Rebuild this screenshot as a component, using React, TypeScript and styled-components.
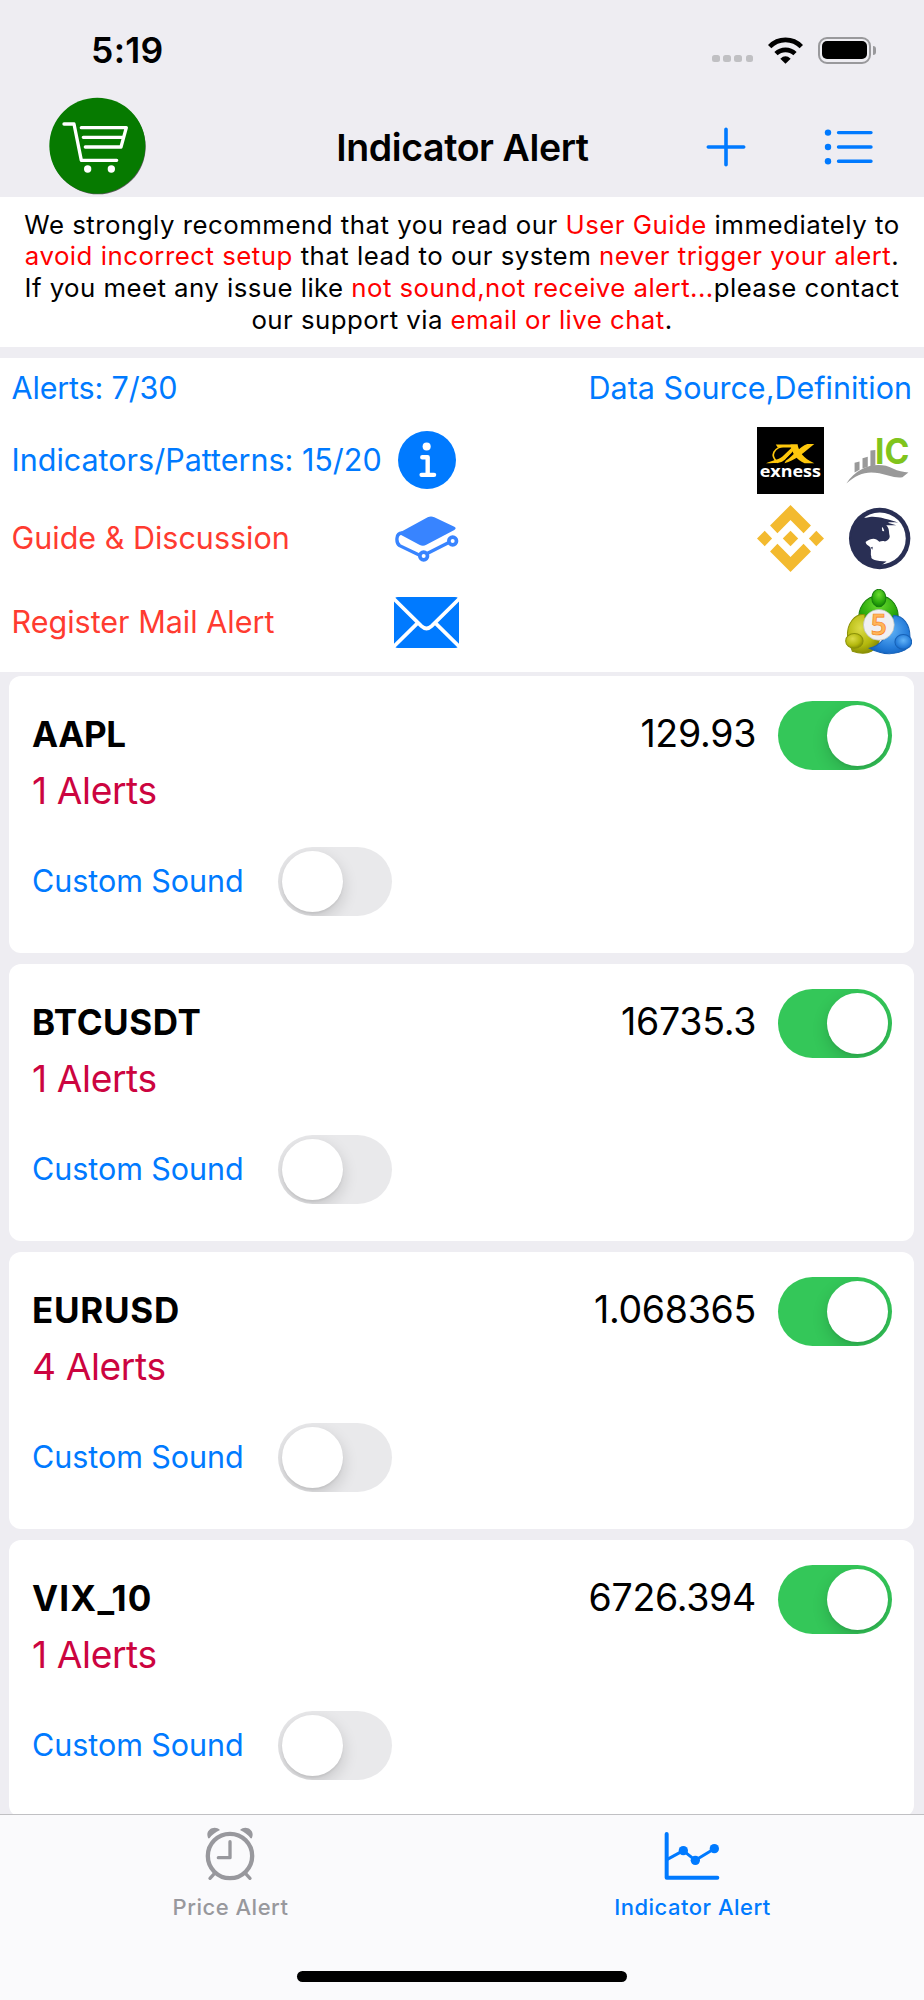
import React from "react";
import styled, { createGlobalStyle } from "styled-components";

const colors = {
  blue: "#007aff",
  red: "#ff3b30",
  pureRed: "#ff0000",
  crimson: "#cc0440",
  green: "#34c759",
  gray: "#98989d",
  background: "#eeedf2",
};

const GlobalStyle = createGlobalStyle`
  * {
    box-sizing: border-box;
  }

  body {
    margin: 0;
    background: ${colors.background};
    font-family: Inter, "Liberation Sans", sans-serif;
    color: #000;
  }

  svg {
    display: block;
    flex: none;
  }
`;

const Screen = styled.div`
  display: flex;
  flex-direction: column;
  width: 924px;
  height: 2000px;
  overflow: hidden;
`;

const StatusBar = styled.div`
  display: flex;
  align-items: center;
  justify-content: space-between;
  flex: none;
  height: 97px;
  padding: 3px 48px 0 91px;
`;

const Time = styled.span`
  font-size: 35.5px;
  font-weight: 600;
  letter-spacing: 0.3px;
`;

const StatusIcons = styled.div`
  display: flex;
  align-items: center;
`;

const SignalDots = styled.div`
  display: flex;
  gap: 3.6px;
  margin: 17px 15px 0 0;
`;

const SignalDot = styled.span`
  width: 7.5px;
  height: 7.5px;
  border-radius: 2.5px;
  background: #c0c0c3;
`;

const Battery = styled.div`
  display: flex;
  align-items: center;
  margin-left: 15px;
`;

const BatteryCase = styled.div`
  width: 53px;
  height: 27px;
  padding: 2.3px;
  border: 2px solid #99999c;
  border-radius: 9px;
`;

const BatteryCharge = styled.div`
  height: 100%;
  border-radius: 5px;
  background: #000;
`;

const BatteryTip = styled.div`
  width: 3px;
  height: 9px;
  margin-left: 2px;
  border-radius: 0 4px 4px 0;
  background: #99999c;
`;

const NavBar = styled.header`
  display: grid;
  grid-template-columns: 1fr auto 1fr;
  align-items: center;
  flex: none;
  height: 99.5px;
  padding: 0 51px 0 49px;
`;

const NavTitle = styled.h1`
  margin: 0;
  padding-left: 3px;
  font-size: 37.5px;
  font-weight: 600;
  letter-spacing: -0.4px;
`;

const NavActions = styled.div`
  display: flex;
  align-items: center;
  justify-content: flex-end;
  gap: 78px;
`;

const Notice = styled.p`
  flex: none;
  height: 150.5px;
  margin: 0;
  padding-top: 12px;
  background: #fff;
  font-size: 25.8px;
  line-height: 31.8px;
  text-align: center;
  white-space: nowrap;
`;

const NoticeLine = styled.span<{ $spacing: number }>`
  display: block;
  letter-spacing: ${({ $spacing }) => $spacing}px;
`;

const Warning = styled.span`
  color: ${colors.pureRed};
`;

const Info = styled.section`
  flex: none;
  height: 314px;
  margin-top: 11px;
  padding: 0 12px 0 11.5px;
  background: #fff;
`;

const InfoRow = styled.div<{ $height: number }>`
  display: flex;
  align-items: center;
  height: ${({ $height }) => $height}px;
`;

const InfoLabel = styled.span<{ $color: string; $spacing?: number }>`
  flex: 0 0 382.5px;
  padding-bottom: 2px;
  color: ${({ $color }) => $color};
  font-size: 30.5px;
  letter-spacing: ${({ $spacing = 0 }) => $spacing}px;
  white-space: nowrap;
`;

const InfoLink = styled.span`
  margin-left: auto;
  padding-bottom: 2px;
  color: ${colors.blue};
  font-size: 30.5px;
`;

const InfoIcon = styled.span`
  display: flex;
  justify-content: center;
  width: 65px;
`;

const Sources = styled.div`
  display: flex;
  align-items: center;
  gap: 22px;
  margin-left: auto;
`;

const AlertList = styled.main`
  display: flex;
  flex: 1;
  flex-direction: column;
  gap: 11px;
  min-height: 0;
  padding: 4px 10px 0 9px;
  overflow: hidden;
`;

const Card = styled.article`
  flex: none;
  height: 277px;
  padding: 25px 22px 0 23px;
  border-radius: 12px;
  background: #fff;
`;

const CardHead = styled.div`
  display: flex;
  align-items: center;
  height: 69px;
`;

const Ticker = styled.h2<{ $spacing: number }>`
  margin: 0;
  padding-bottom: 3px;
  font-size: 35px;
  font-weight: 700;
  line-height: 66px;
  letter-spacing: ${({ $spacing }) => $spacing}px;
`;

const Price = styled.span`
  margin: 0 22px 0 auto;
  padding-bottom: 3px;
  font-size: 37.5px;
  line-height: 66px;
  letter-spacing: -0.3px;
`;

const AlertCount = styled.div`
  height: 77px;
  color: ${colors.crimson};
  font-size: 37.2px;
  line-height: 42px;
  letter-spacing: -0.4px;
`;

const SoundRow = styled.div`
  display: flex;
  align-items: center;
  height: 69px;
`;

const SoundLabel = styled.span`
  width: 246px;
  padding-bottom: 2px;
  color: ${colors.blue};
  font-size: 30.5px;
  letter-spacing: -0.05px;
`;

const Track = styled.span<{ $on?: boolean }>`
  display: flex;
  justify-content: ${({ $on }) => ($on ? "flex-end" : "flex-start")};
  flex: none;
  width: 114px;
  height: 69px;
  padding: 4px;
  border-radius: 35px;
  background: ${({ $on }) => ($on ? colors.green : "#e9e9eb")};
  overflow: hidden;
`;

const Knob = styled.span`
  width: 61px;
  height: 61px;
  border-radius: 50%;
  background: #fff;
  box-shadow: 0 6px 16px rgba(0, 0, 0, 0.16), 0 2px 2px rgba(0, 0, 0, 0.05);
`;

const TabBar = styled.nav`
  display: flex;
  flex-direction: column;
  align-items: center;
  flex: none;
  height: 186px;
  border-top: 1px solid #c0c0c3;
  background: #fafafc;
`;

const Tabs = styled.div`
  display: flex;
  width: 100%;
  height: 156px;
`;

const Tab = styled.div<{ $active?: boolean }>`
  display: flex;
  flex: 1;
  flex-direction: column;
  align-items: center;
  padding: 12px 1px 0 0;
  color: ${({ $active }) => ($active ? colors.blue : colors.gray)};

  svg {
    margin-right: 1px;
  }
`;

const TabLabel = styled.span`
  margin-top: 13px;
  font-size: 22px;
  font-weight: 500;
  line-height: 26px;
  letter-spacing: 0.5px;
`;

const HomeIndicator = styled.div`
  width: 330px;
  height: 11px;
  border-radius: 6px;
  background: #000;
`;

const CartSvg = styled.svg`
  margin-bottom: 2px;
`;

const CartIcon = () => (
  <CartSvg width="97" height="98" viewBox="0 0 291 294" fill="none">
    <circle cx="147" cy="149" r="143" fill="#333" opacity="0.8" />
    <circle cx="145" cy="146" r="144" fill="#067a00" />
    <g stroke="#fff" strokeWidth="10" strokeLinecap="round" strokeLinejoin="round">
      <path d="M45 81H75L97 190H203" />
      <path d="M97 92H232L216 150H109M103 121H222" />
    </g>
    <circle cx="116" cy="216" r="11" fill="#fff" />
    <circle cx="187" cy="216" r="11" fill="#fff" />
  </CartSvg>
);

const WifiIcon = () => (
  <svg width="35" height="27" viewBox="0 0 105 81">
    <g fill="none" stroke="#000" strokeWidth="14">
      <path d="M5 29A66 66 0 0 1 100 29" />
      <path d="M24 50A41 41 0 0 1 81 50" />
    </g>
    <path d="M37 65Q52.5 51 68 65L52.5 80Z" />
  </svg>
);

const PlusIcon = () => (
  <svg width="40" height="40" viewBox="0 0 40 40" stroke={colors.blue} strokeWidth="3.6" strokeLinecap="round">
    <path d="M20 2.3V37.7M2.3 20H37.7" />
  </svg>
);

const ListIcon = () => (
  <svg width="49" height="36" viewBox="0 0 49 36">
    <g fill={colors.blue}>
      <circle cx="4" cy="3.6" r="3.2" />
      <circle cx="4" cy="18" r="3.2" />
      <circle cx="4" cy="32.3" r="3.2" />
    </g>
    <path
      d="M14.5 3.6H47M14.5 18H47M14.5 32.3H47"
      stroke={colors.blue}
      strokeWidth="3.4"
      strokeLinecap="round"
    />
  </svg>
);

const InfoCircleIcon = () => (
  <svg width="58" height="58" viewBox="0 0 172 172">
    <circle cx="86" cy="86" r="86" fill={colors.blue} />
    <circle cx="85" cy="46" r="12" fill="#fff" />
    <path
      d="M72 78H88V130M70 130H107"
      fill="none"
      stroke="#fff"
      strokeWidth="13"
      strokeLinecap="round"
      strokeLinejoin="round"
    />
  </svg>
);

const BookIcon = () => (
  <svg width="64" height="46" viewBox="0 0 192 138" fill="none">
    <path d="M17 48Q60 25 98 4Q108 -1 118 4L178 32Q186 37 178 42L94 86Q84 92 73 86L17 56Z" fill="#3884ff" />
    <g stroke="#3884ff">
      <path d="M22 51C2 50 2 80 14 89L74 118M98 112L160 80" strokeWidth="10" />
      <circle cx="86" cy="120" r="11.5" strokeWidth="11" />
      <circle cx="173" cy="75" r="11.5" strokeWidth="11" />
    </g>
  </svg>
);

const MailIcon = () => (
  <svg width="65" height="51" viewBox="0 0 194 152">
    <rect width="194" height="152" rx="12" fill={colors.blue} />
    <path
      d="M-4 2L82 87Q97 101 112 87L198 2M71 77L-4 151M123 77L198 151"
      fill="none"
      stroke="#fff"
      strokeWidth="11"
    />
  </svg>
);

const ExnessLogo = () => (
  <svg width="67" height="67" viewBox="0 0 200 200">
    <rect width="200" height="200" />
    <g fill="#fdc70c">
      <path d="M27 108C46 99 62 99 76 88L104 61H62L56 52H122L84 97C74 107 61 108 27 108Z" />
      <path d="M100 52H121C125 73 138 93 171 108H142C117 97 104 77 100 52Z" />
      <path d="M171 51H150C126 60 112 83 86 101L82 108C113 101 142 75 171 51Z" />
    </g>
    <path d="M86 56C48 61 38 86 61 105C82 97 99 81 114 59" fill="none" stroke="#fdc70c" strokeWidth="5" />
    <text
      x="8"
      y="149"
      fill="#fff"
      fontFamily="'Open Sans', sans-serif"
      fontSize="49"
      fontWeight="700"
      textLength="183"
      lengthAdjust="spacingAndGlyphs"
    >
      exness
    </text>
  </svg>
);

const IcLogo = () => (
  <svg width="66" height="67" viewBox="0 0 200 200">
    <path d="M26 107L41 103V128L26 136ZM50 93L66 89V119L50 124ZM74 70L89 68V115L74 118Z" fill="#999" />
    <path d="M1 170C38 113 100 103 142 124C158 133 174 134 189 136L171 151C147 155 124 143 101 139C65 131 34 139 1 170Z" fill="#999" />
    <text
      x="88"
      y="110"
      fill="#80c41c"
      fontFamily="Inter, sans-serif"
      fontSize="108"
      fontWeight="700"
      textLength="104"
      lengthAdjust="spacingAndGlyphs"
    >
      IC
    </text>
  </svg>
);

const BinanceLogo = () => (
  <svg width="67" height="67" viewBox="0 0 200 200" fill="#f3ba2f">
    <path d="M100 0L161 61L139 84L100 45L61 84L39 61Z" />
    <path d="M100 200L161 139L139 116L100 155L61 116L39 139Z" />
    <path d="M100 77L123 100L100 123L77 100Z" />
    <path d="M23 77L45 100L23 123L0 100Z" />
    <path d="M177 77L200 100L177 123L155 100Z" />
  </svg>
);

const BullLogo = () => (
  <svg width="66" height="67" viewBox="-8 -6 200 200">
    <circle cx="94" cy="94" r="93" fill="#292f54" />
    <circle cx="94" cy="94" r="79" fill="#fff" />
    <path
      d="M50 22C42 32 48 33 64 29C82 25 122 36 150 46C139 45 126 44 119 46L144 54L114 54C124 64 121 72 124 85C126 92 120 100 110 103C104 100 98 102 93 104C80 90 68 94 52 104C50 112 62 116 66 121C70 131 65 140 69 150C66 157 83 162 115 164L94 178C30 178 8 134 8 90C14 44 30 30 50 22Z"
      fill="#292f54"
    />
    <path d="M101 64C100 55 106 62 108 72L102 71Z" fill="#fff" />
    <path d="M67 121L73 119L72 128Z" fill="#292f54" />
  </svg>
);

const MetaTraderLogo = () => (
  <svg width="67" height="67" viewBox="0 0 200 200">
    <defs>
      <radialGradient id="mtGreen" cx="50%" cy="30%" r="75%">
        <stop offset="0" stopColor="#6bdc30" />
        <stop offset="0.6" stopColor="#2dab0d" />
        <stop offset="1" stopColor="#0c7904" />
      </radialGradient>
      <radialGradient id="mtYellow" cx="40%" cy="35%" r="75%">
        <stop offset="0" stopColor="#dcdc48" />
        <stop offset="0.6" stopColor="#b4b80d" />
        <stop offset="1" stopColor="#767d03" />
      </radialGradient>
      <radialGradient id="mtBlue" cx="50%" cy="40%" r="75%">
        <stop offset="0" stopColor="#62b4f8" />
        <stop offset="0.6" stopColor="#267dda" />
        <stop offset="1" stopColor="#0757b4" />
      </radialGradient>
    </defs>
    <path
      d="M42 98C36 58 60 20 101 20C143 20 164 58 158 100L122 113H78Z"
      fill="url(#mtGreen)"
      stroke="#167d0c"
      strokeWidth="3"
    />
    <path
      d="M8 145C3 104 31 71 59 77C60 110 71 138 104 149C96 182 71 202 22 186Z"
      fill="url(#mtYellow)"
      stroke="#8b9108"
      strokeWidth="3"
    />
    <path
      d="M145 79C174 79 194 107 194 143L181 181C150 197 111 197 73 177C104 170 126 148 145 79Z"
      fill="url(#mtBlue)"
      stroke="#1661b7"
      strokeWidth="3"
    />
    <ellipse cx="101" cy="27" rx="21" ry="26" fill="url(#mtGreen)" stroke="#167d0c" strokeWidth="3" />
    <ellipse cx="28" cy="155" rx="26" ry="22" fill="url(#mtYellow)" stroke="#8b9108" strokeWidth="3" />
    <ellipse cx="174" cy="158" rx="25" ry="22" fill="url(#mtBlue)" stroke="#1661b7" strokeWidth="3" />
    <circle cx="101" cy="107" r="46" fill="#f0f0f2" stroke="#b8bdba" strokeWidth="2" />
    <text
      x="101"
      y="137"
      fill="#ffb659"
      stroke="#f58220"
      strokeWidth="2"
      textAnchor="middle"
      fontFamily="'Noto Sans', sans-serif"
      fontSize="84"
      fontWeight="600"
    >
      5
    </text>
  </svg>
);

const AlarmIcon = () => (
  <svg width="50" height="54" viewBox="0 0 150 162" fill="none">
    <g stroke="currentColor" strokeLinecap="round" strokeLinejoin="round">
      <circle cx="75" cy="87" r="66.5" strokeWidth="13" />
      <path d="M75 44V92H40" strokeWidth="10" />
      <path d="M26 142L15 154M124 142L135 154" strokeWidth="10" />
    </g>
    <path d="M9 32C-1 8 29 -8 45 9Q24 19 14 33Q11 36 9 32ZM141 32C151 8 121 -8 105 9Q126 19 136 33Q139 36 141 32Z" fill="currentColor" />
  </svg>
);

const ChartIcon = () => (
  <svg width="56" height="54" viewBox="0 0 168 162">
    <g fill="none" stroke="currentColor" strokeLinecap="round" strokeLinejoin="round">
      <path d="M8 21V152H160" strokeWidth="12" />
      <path d="M10 97L58 71L94 100L151 65" strokeWidth="9" />
    </g>
    <g fill="currentColor">
      <circle cx="58" cy="71" r="14" />
      <circle cx="94" cy="100" r="14" />
      <circle cx="151" cy="65" r="14" />
    </g>
  </svg>
);

const Switch = ({ on }: { on?: boolean }) => (
  <Track $on={on}>
    <Knob />
  </Track>
);

const alerts = [
  { ticker: "AAPL", spacing: -0.4, price: "129.93", count: 1 },
  { ticker: "BTCUSDT", spacing: 0.6, price: "16735.3", count: 1 },
  { ticker: "EURUSD", spacing: 0.7, price: "1.068365", count: 4 },
  { ticker: "VIX_10", spacing: 1.2, price: "6726.394", count: 1 },
];

const App = () => {
  return (
    <Screen>
      <GlobalStyle />
      <StatusBar>
        <Time>5:19</Time>
        <StatusIcons>
          <SignalDots>
            <SignalDot />
            <SignalDot />
            <SignalDot />
            <SignalDot />
          </SignalDots>
          <WifiIcon />
          <Battery>
            <BatteryCase>
              <BatteryCharge />
            </BatteryCase>
            <BatteryTip />
          </Battery>
        </StatusIcons>
      </StatusBar>
      <NavBar>
        <CartIcon />
        <NavTitle>Indicator Alert</NavTitle>
        <NavActions>
          <PlusIcon />
          <ListIcon />
        </NavActions>
      </NavBar>
      <Notice>
        <NoticeLine $spacing={0.5}>
          We strongly recommend that you read our <Warning>User Guide</Warning> immediately to
        </NoticeLine>
        <NoticeLine $spacing={0.5}>
          <Warning>avoid incorrect setup</Warning> that lead to our system{" "}
          <Warning>never trigger your alert</Warning>.
        </NoticeLine>
        <NoticeLine $spacing={0.45}>
          If you meet any issue like <Warning>not sound,not receive alert...</Warning>please contact
        </NoticeLine>
        <NoticeLine $spacing={0.45}>
          our support via <Warning>email or live chat</Warning>.
        </NoticeLine>
      </Notice>
      <Info>
        <InfoRow $height={60}>
          <InfoLabel $color={colors.blue} $spacing={-0.15}>
            Alerts: 7/30
          </InfoLabel>
          <InfoLink>Data Source,Definition</InfoLink>
        </InfoRow>
        <InfoRow $height={84}>
          <InfoLabel $color={colors.blue}>Indicators/Patterns: 15/20</InfoLabel>
          <InfoIcon>
            <InfoCircleIcon />
          </InfoIcon>
          <Sources>
            <ExnessLogo />
            <IcLogo />
          </Sources>
        </InfoRow>
        <InfoRow $height={73}>
          <InfoLabel $color={colors.red}>Guide &amp; Discussion</InfoLabel>
          <InfoIcon>
            <BookIcon />
          </InfoIcon>
          <Sources>
            <BinanceLogo />
            <BullLogo />
          </Sources>
        </InfoRow>
        <InfoRow $height={94}>
          <InfoLabel $color={colors.red}>Register Mail Alert</InfoLabel>
          <InfoIcon>
            <MailIcon />
          </InfoIcon>
          <Sources>
            <MetaTraderLogo />
          </Sources>
        </InfoRow>
      </Info>
      <AlertList>
        {alerts.map(({ ticker, spacing, price, count }) => (
          <Card key={ticker}>
            <CardHead>
              <Ticker $spacing={spacing}>{ticker}</Ticker>
              <Price>{price}</Price>
              <Switch on />
            </CardHead>
            <AlertCount>{count} Alerts</AlertCount>
            <SoundRow>
              <SoundLabel>Custom Sound</SoundLabel>
              <Switch />
            </SoundRow>
          </Card>
        ))}
      </AlertList>
      <TabBar>
        <Tabs>
          <Tab>
            <AlarmIcon />
            <TabLabel>Price Alert</TabLabel>
          </Tab>
          <Tab $active>
            <ChartIcon />
            <TabLabel>Indicator Alert</TabLabel>
          </Tab>
        </Tabs>
        <HomeIndicator />
      </TabBar>
    </Screen>
  );
};

export default App;
